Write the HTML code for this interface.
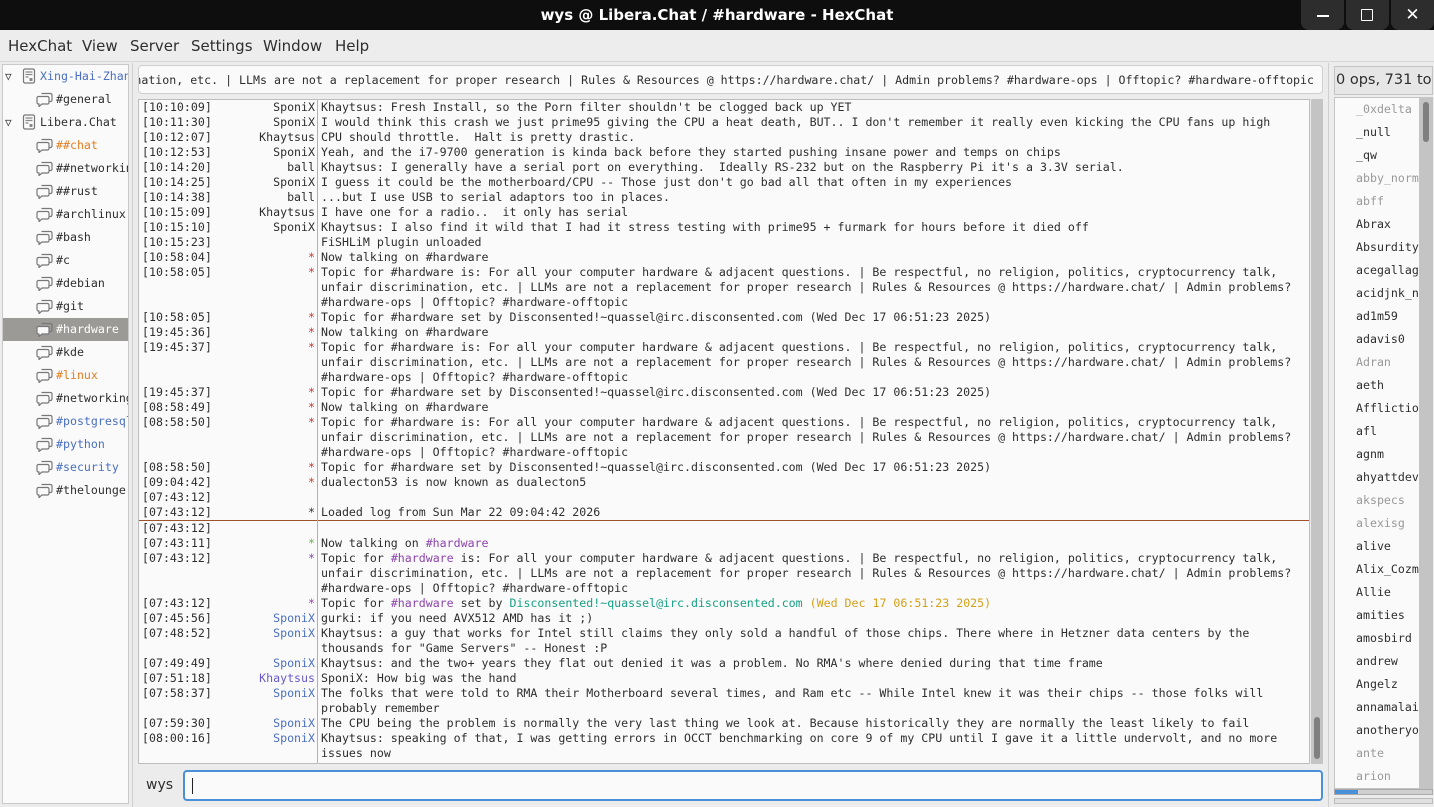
<!DOCTYPE html>
<html><head><meta charset="utf-8"><style>
*{margin:0;padding:0;box-sizing:border-box}
body{width:1434px;height:807px;overflow:hidden;background:#ececec;font-family:"DejaVu Sans","Liberation Sans",sans-serif;position:relative}
.abs{position:absolute}
#title{left:0;top:0;width:1434px;height:30px;background:#0e0e0e;color:#fff;font-size:15px;font-weight:bold;text-align:center;line-height:30px}
.wb{top:0;width:43px;height:30px;background:#2d2d2d;border-radius:0 0 8px 8px}
#menu{left:0;top:30px;width:1434px;height:32px;background:#ededed;border-bottom:1px solid #d6d6d6;font-size:15px;color:#2e2e2e}
#menu span{position:absolute;top:7px}
#tree{left:2px;top:64px;width:127px;height:740px;background:#fafafa;border:1px solid #c9c9c9;overflow:hidden;font-family:"DejaVu Sans Mono",monospace;font-size:11.6px;color:#2e2e2e}
.ti{position:absolute;height:23px;line-height:23px;white-space:nowrap}
.ic{position:absolute;width:17px;height:16px}
#topic{left:138px;top:65px;width:1185px;height:29px;background:#fafafa;border:1px solid #cfcfcf;border-radius:4px;font-family:"DejaVu Sans Mono",monospace;font-size:11.6px;line-height:28px;white-space:nowrap;overflow:hidden;color:#2e2e2e;display:flex;justify-content:flex-end;padding-right:8px}
#chat{left:138px;top:99px;width:1172px;height:665px;background:#fafafa;border:1px solid #bdbdbd;overflow:hidden;font-family:"DejaVu Sans Mono",monospace;font-size:11.6px;color:#2e2e2e}
.r{position:absolute;left:0;height:15px;line-height:15px;white-space:pre;width:1170px}
.t{position:absolute;left:3px}
.n{position:absolute;right:994px;text-align:right}
.m{position:absolute;left:182px}
.red{color:#c0392b}.pu{color:#8e44ad}.gr{color:#16a085}.ye{color:#d4a017}.bl{color:#4a6fc2}.g2{color:#6ab04c}
#vsep{left:317px;top:100px;width:1px;height:663px;background:#b0b0b0}
#vscroll{left:1311px;top:99px;width:12px;height:665px;background:#c4c4c4}
#nicks{left:1334px;top:97px;width:99px;height:692px;background:#fafafa;border:1px solid #c4c4c4;overflow:hidden;color:#2e2e2e}
.nk{position:absolute;left:21px;height:23px;line-height:23px;white-space:nowrap;font-family:"DejaVu Sans Mono",monospace;font-size:11.6px}
.gy{color:#999}
</style></head><body>
<svg width="0" height="0" style="position:absolute"><defs>
<symbol id="bub" viewBox="0 0 17 16"><path d="M5.5 2.5h9a1.5 1.5 0 0 1 1.5 1.5v5a1.5 1.5 0 0 1-1.5 1.5h-1" fill="none" stroke="#777" stroke-width="1.2"/><path d="M2.5 5.5h9a1.5 1.5 0 0 1 1.5 1.5v4.5a1.5 1.5 0 0 1-1.5 1.5H6l-3 2.5v-2.5h-.5A1.5 1.5 0 0 1 1 11.5V7a1.5 1.5 0 0 1 1.5-1.5z" fill="#fafafa" stroke="#777" stroke-width="1.2"/></symbol>
<symbol id="srv" viewBox="0 0 14 16"><rect x="1.5" y="1" width="11" height="14" rx="1.5" fill="#fafafa" stroke="#777" stroke-width="1.2"/><path d="M3.5 4h7M3.5 6.5h7M3.5 9h3" stroke="#888" stroke-width="1.2"/><rect x="7.5" y="10" width="3" height="3" fill="#888"/></symbol>
</defs></svg>
<div id="title" class="abs">wys @ Libera.Chat / #hardware - HexChat</div>
<div class="abs wb" style="left:1301px"><div class="abs" style="left:16px;top:15px;width:12px;height:1.5px;background:#fff"></div></div>
<div class="abs wb" style="left:1346px"><div class="abs" style="left:15px;top:9px;width:12px;height:12px;border:1.5px solid #fff;border-radius:1px"></div></div>
<div class="abs wb" style="left:1391px;color:#fff;font-size:17px;text-align:center;line-height:30px">✕</div>
<div id="menu" class="abs"><span style="left:8px">HexChat</span><span style="left:82px">View</span><span style="left:130px">Server</span><span style="left:191px">Settings</span><span style="left:263px">Window</span><span style="left:335px">Help</span></div>
<div class="abs" style="left:132px;top:63px;width:1px;height:744px;background:#cfcfcf"></div>
<div class="abs" style="left:1328px;top:63px;width:1px;height:744px;background:#cfcfcf"></div>

<div id="tree" class="abs">
<div class="ti" style="left:2px;top:0px;font-size:11px">▽</div><svg class="ic" style="left:19px;top:3px;width:14px"><use href="#srv"/></svg><div class="ti" style="left:37px;top:0;color:#4a6fc2">Xing-Hai-Zhang</div>
<svg class="ic" style="left:33px;top:26px"><use href="#bub"/></svg><div class="ti" style="left:53px;top:23px">#general</div>
<div class="ti" style="left:2px;top:46px;font-size:11px">▽</div><svg class="ic" style="left:19px;top:49px;width:14px"><use href="#srv"/></svg><div class="ti" style="left:37px;top:46px">Libera.Chat</div>
<svg class="ic" style="left:33px;top:72px"><use href="#bub"/></svg><div class="ti" style="left:53px;top:69px;color:#e67e22">##chat</div>
<svg class="ic" style="left:33px;top:95px"><use href="#bub"/></svg><div class="ti" style="left:53px;top:92px">##networking</div>
<svg class="ic" style="left:33px;top:118px"><use href="#bub"/></svg><div class="ti" style="left:53px;top:115px">##rust</div>
<svg class="ic" style="left:33px;top:141px"><use href="#bub"/></svg><div class="ti" style="left:53px;top:138px">#archlinux</div>
<svg class="ic" style="left:33px;top:164px"><use href="#bub"/></svg><div class="ti" style="left:53px;top:161px">#bash</div>
<svg class="ic" style="left:33px;top:187px"><use href="#bub"/></svg><div class="ti" style="left:53px;top:184px">#c</div>
<svg class="ic" style="left:33px;top:210px"><use href="#bub"/></svg><div class="ti" style="left:53px;top:207px">#debian</div>
<svg class="ic" style="left:33px;top:233px"><use href="#bub"/></svg><div class="ti" style="left:53px;top:230px">#git</div>
<div class="ti" style="left:0;top:253px;width:127px;background:#9b9a96"></div><svg class="ic" style="left:33px;top:256px"><use href="#bub"/></svg><div class="ti" style="left:53px;top:253px;color:#fff">#hardware</div>
<svg class="ic" style="left:33px;top:279px"><use href="#bub"/></svg><div class="ti" style="left:53px;top:276px">#kde</div>
<svg class="ic" style="left:33px;top:302px"><use href="#bub"/></svg><div class="ti" style="left:53px;top:299px;color:#e67e22">#linux</div>
<svg class="ic" style="left:33px;top:325px"><use href="#bub"/></svg><div class="ti" style="left:53px;top:322px">#networking</div>
<svg class="ic" style="left:33px;top:348px"><use href="#bub"/></svg><div class="ti" style="left:53px;top:345px;color:#4a6fc2">#postgresql</div>
<svg class="ic" style="left:33px;top:371px"><use href="#bub"/></svg><div class="ti" style="left:53px;top:368px;color:#4a6fc2">#python</div>
<svg class="ic" style="left:33px;top:394px"><use href="#bub"/></svg><div class="ti" style="left:53px;top:391px;color:#4a6fc2">#security</div>
<svg class="ic" style="left:33px;top:417px"><use href="#bub"/></svg><div class="ti" style="left:53px;top:414px">#thelounge</div>
</div>

<div id="topic" class="abs"><span>For all your computer hardware &amp; adjacent questions. | Be respectful, no religion, politics, cryptocurrency talk, unfair discrimination, etc. | LLMs are not a replacement for proper research | Rules &amp; Resources @ https://hardware.chat/ | Admin problems? #hardware-ops | Offtopic? #hardware-offtopic</span></div>

<div id="chat" class="abs">
<div class="r" style="top:0"><span class="t">[10:10:09]</span><span class="n">SponiX</span><span class="m">Khaytsus: Fresh Install, so the Porn filter shouldn't be clogged back up YET</span></div>
<div class="r" style="top:15px"><span class="t">[10:11:30]</span><span class="n">SponiX</span><span class="m">I would think this crash we just prime95 giving the CPU a heat death, BUT.. I don't remember it really even kicking the CPU fans up high</span></div>
<div class="r" style="top:30px"><span class="t">[10:12:07]</span><span class="n">Khaytsus</span><span class="m">CPU should throttle.  Halt is pretty drastic.</span></div>
<div class="r" style="top:45px"><span class="t">[10:12:53]</span><span class="n">SponiX</span><span class="m">Yeah, and the i7-9700 generation is kinda back before they started pushing insane power and temps on chips</span></div>
<div class="r" style="top:60px"><span class="t">[10:14:20]</span><span class="n">ball</span><span class="m">Khaytsus: I generally have a serial port on everything.  Ideally RS-232 but on the Raspberry Pi it's a 3.3V serial.</span></div>
<div class="r" style="top:75px"><span class="t">[10:14:25]</span><span class="n">SponiX</span><span class="m">I guess it could be the motherboard/CPU -- Those just don't go bad all that often in my experiences</span></div>
<div class="r" style="top:90px"><span class="t">[10:14:38]</span><span class="n">ball</span><span class="m">...but I use USB to serial adaptors too in places.</span></div>
<div class="r" style="top:105px"><span class="t">[10:15:09]</span><span class="n">Khaytsus</span><span class="m">I have one for a radio..  it only has serial</span></div>
<div class="r" style="top:120px"><span class="t">[10:15:10]</span><span class="n">SponiX</span><span class="m">Khaytsus: I also find it wild that I had it stress testing with prime95 + furmark for hours before it died off</span></div>
<div class="r" style="top:135px"><span class="t">[10:15:23]</span><span class="m">FiSHLiM plugin unloaded</span></div>
<div class="r" style="top:150px"><span class="t">[10:58:04]</span><span class="n red">*</span><span class="m">Now talking on #hardware</span></div>
<div class="r" style="top:165px"><span class="t">[10:58:05]</span><span class="n red">*</span><span class="m">Topic for #hardware is: For all your computer hardware &amp; adjacent questions. | Be respectful, no religion, politics, cryptocurrency talk,</span></div>
<div class="r" style="top:180px"><span class="m">unfair discrimination, etc. | LLMs are not a replacement for proper research | Rules &amp; Resources @ https://hardware.chat/ | Admin problems?</span></div>
<div class="r" style="top:195px"><span class="m">#hardware-ops | Offtopic? #hardware-offtopic</span></div>
<div class="r" style="top:210px"><span class="t">[10:58:05]</span><span class="n red">*</span><span class="m">Topic for #hardware set by Disconsented!~quassel@irc.disconsented.com (Wed Dec 17 06:51:23 2025)</span></div>
<div class="r" style="top:225px"><span class="t">[19:45:36]</span><span class="n red">*</span><span class="m">Now talking on #hardware</span></div>
<div class="r" style="top:240px"><span class="t">[19:45:37]</span><span class="n red">*</span><span class="m">Topic for #hardware is: For all your computer hardware &amp; adjacent questions. | Be respectful, no religion, politics, cryptocurrency talk,</span></div>
<div class="r" style="top:255px"><span class="m">unfair discrimination, etc. | LLMs are not a replacement for proper research | Rules &amp; Resources @ https://hardware.chat/ | Admin problems?</span></div>
<div class="r" style="top:270px"><span class="m">#hardware-ops | Offtopic? #hardware-offtopic</span></div>
<div class="r" style="top:285px"><span class="t">[19:45:37]</span><span class="n red">*</span><span class="m">Topic for #hardware set by Disconsented!~quassel@irc.disconsented.com (Wed Dec 17 06:51:23 2025)</span></div>
<div class="r" style="top:300px"><span class="t">[08:58:49]</span><span class="n red">*</span><span class="m">Now talking on #hardware</span></div>
<div class="r" style="top:315px"><span class="t">[08:58:50]</span><span class="n red">*</span><span class="m">Topic for #hardware is: For all your computer hardware &amp; adjacent questions. | Be respectful, no religion, politics, cryptocurrency talk,</span></div>
<div class="r" style="top:330px"><span class="m">unfair discrimination, etc. | LLMs are not a replacement for proper research | Rules &amp; Resources @ https://hardware.chat/ | Admin problems?</span></div>
<div class="r" style="top:345px"><span class="m">#hardware-ops | Offtopic? #hardware-offtopic</span></div>
<div class="r" style="top:360px"><span class="t">[08:58:50]</span><span class="n red">*</span><span class="m">Topic for #hardware set by Disconsented!~quassel@irc.disconsented.com (Wed Dec 17 06:51:23 2025)</span></div>
<div class="r" style="top:375px"><span class="t">[09:04:42]</span><span class="n red">*</span><span class="m">dualecton53 is now known as dualecton5</span></div>
<div class="r" style="top:390px"><span class="t">[07:43:12]</span></div>
<div class="r" style="top:405px"><span class="t">[07:43:12]</span><span class="n">*</span><span class="m">Loaded log from Sun Mar 22 09:04:42 2026</span></div>
<div class="abs" style="left:0;top:420px;width:1170px;height:1px;background:#a0522d"></div>
<div class="r" style="top:421px"><span class="t">[07:43:12]</span></div>
<div class="r" style="top:436px"><span class="t">[07:43:11]</span><span class="n g2">*</span><span class="m">Now talking on <span class="pu">#hardware</span></span></div>
<div class="r" style="top:451px"><span class="t">[07:43:12]</span><span class="n pu">*</span><span class="m">Topic for <span class="pu">#hardware</span> is: For all your computer hardware &amp; adjacent questions. | Be respectful, no religion, politics, cryptocurrency talk,</span></div>
<div class="r" style="top:466px"><span class="m">unfair discrimination, etc. | LLMs are not a replacement for proper research | Rules &amp; Resources @ https://hardware.chat/ | Admin problems?</span></div>
<div class="r" style="top:481px"><span class="m">#hardware-ops | Offtopic? #hardware-offtopic</span></div>
<div class="r" style="top:496px"><span class="t">[07:43:12]</span><span class="n pu">*</span><span class="m">Topic for <span class="pu">#hardware</span> set by <span class="gr">Disconsented!~quassel@irc.disconsented.com</span> <span class="ye">(Wed Dec 17 06:51:23 2025)</span></span></div>
<div class="r" style="top:511px"><span class="t">[07:45:56]</span><span class="n bl">SponiX</span><span class="m">gurki: if you need AVX512 AMD has it ;)</span></div>
<div class="r" style="top:526px"><span class="t">[07:48:52]</span><span class="n bl">SponiX</span><span class="m">Khaytsus: a guy that works for Intel still claims they only sold a handful of those chips. There where in Hetzner data centers by the</span></div>
<div class="r" style="top:541px"><span class="m">thousands for "Game Servers" -- Honest :P</span></div>
<div class="r" style="top:556px"><span class="t">[07:49:49]</span><span class="n bl">SponiX</span><span class="m">Khaytsus: and the two+ years they flat out denied it was a problem. No RMA's where denied during that time frame</span></div>
<div class="r" style="top:571px"><span class="t">[07:51:18]</span><span class="n" style="color:#6a5acd">Khaytsus</span><span class="m">SponiX: How big was the hand</span></div>
<div class="r" style="top:586px"><span class="t">[07:58:37]</span><span class="n bl">SponiX</span><span class="m">The folks that were told to RMA their Motherboard several times, and Ram etc -- While Intel knew it was their chips -- those folks will</span></div>
<div class="r" style="top:601px"><span class="m">probably remember</span></div>
<div class="r" style="top:616px"><span class="t">[07:59:30]</span><span class="n bl">SponiX</span><span class="m">The CPU being the problem is normally the very last thing we look at. Because historically they are normally the least likely to fail</span></div>
<div class="r" style="top:631px"><span class="t">[08:00:16]</span><span class="n bl">SponiX</span><span class="m">Khaytsus: speaking of that, I was getting errors in OCCT benchmarking on core 9 of my CPU until I gave it a little undervolt, and no more</span></div>
<div class="r" style="top:646px"><span class="m">issues now</span></div>
</div>
<div id="vsep" class="abs"></div>
<div id="vscroll" class="abs"><div class="abs" style="left:3px;top:618px;width:6px;height:42px;background:#7f7f7f;border-radius:3px"></div></div>

<div class="abs" style="left:146px;top:777px;font-size:14px;color:#2e2e2e">wys</div>
<div class="abs" style="left:183px;top:770px;width:1140px;height:31px;background:#fafafa;border:2px solid #4a90d9;border-radius:4px"><div class="abs" style="left:7px;top:6px;width:1px;height:16px;background:#222"></div></div>

<div class="abs" style="left:1334px;top:66px;width:99px;height:29px;background:#e6e6e6;border:1px solid #c4c4c4;font-size:14.5px;line-height:27px;white-space:nowrap;overflow:hidden;color:#2e2e2e;padding-left:1px">0 ops, 731 total</div>
<div id="nicks" class="abs">
<div class="nk gy" style="top:0">_0xdelta</div><div class="nk" style="top:23px">_null</div><div class="nk" style="top:46px">_qw</div><div class="nk gy" style="top:69px">abby_norm</div><div class="nk gy" style="top:92px">abff</div><div class="nk" style="top:115px">Abrax</div><div class="nk" style="top:138px">Absurdity</div><div class="nk" style="top:161px">acegallag</div><div class="nk" style="top:184px">acidjnk_n</div><div class="nk" style="top:207px">ad1m59</div><div class="nk" style="top:230px">adavis0</div><div class="nk gy" style="top:253px">Adran</div><div class="nk" style="top:276px">aeth</div><div class="nk" style="top:299px">Afflictio</div><div class="nk" style="top:322px">afl</div><div class="nk" style="top:345px">agnm</div><div class="nk" style="top:368px">ahyattdev</div><div class="nk gy" style="top:391px">akspecs</div><div class="nk gy" style="top:414px">alexisg</div><div class="nk" style="top:437px">alive</div><div class="nk" style="top:460px">Alix_Cozm</div><div class="nk" style="top:483px">Allie</div><div class="nk" style="top:506px">amities</div><div class="nk" style="top:529px">amosbird</div><div class="nk" style="top:552px">andrew</div><div class="nk" style="top:575px">Angelz</div><div class="nk" style="top:598px">annamalai</div><div class="nk" style="top:621px">anotheryo</div><div class="nk gy" style="top:644px">ante</div><div class="nk gy" style="top:667px">arion</div>
<div class="abs" style="left:84px;top:0;width:14px;height:690px;background:#c4c4c4"><div class="abs" style="left:4px;top:4px;width:6px;height:40px;background:#7f7f7f;border-radius:3px"></div></div>
</div>
<div class="abs" style="left:1334px;top:789px;width:99px;height:6px;background:#d0d0d0;border:1px solid #aaa"><div class="abs" style="left:0;top:0;width:23px;height:4px;background:#4a90d9"></div></div>
<div class="abs" style="left:1334px;top:798px;width:99px;height:6px;background:#e0e0e0;border:1px solid #bbb"></div>
</body></html>
